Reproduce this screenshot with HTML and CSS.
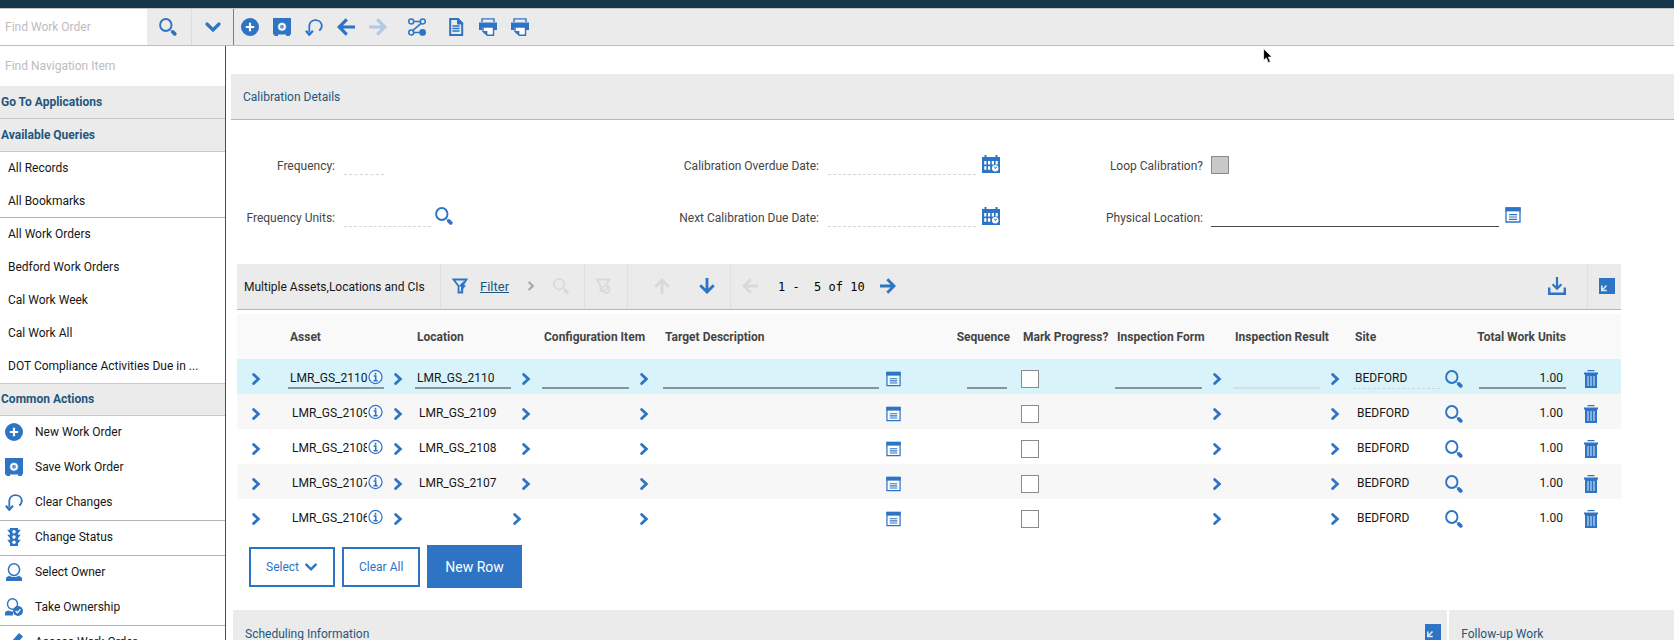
FILE: index.html
```html
<!DOCTYPE html>
<html lang="en">
<head>
  <meta charset="UTF-8">
  <title>Work Order Tracking</title>
  <link rel="stylesheet" href="styles.css">
</head>
<body>

  <!-- Icon sprite -->
  <svg class="sprite" aria-hidden="true">
    <symbol id="search" viewBox="0 0 18 18">
      <ellipse cx="6.8" cy="7" rx="5.7" ry="6" fill="none" stroke="currentColor" stroke-width="1.9"/>
      <path d="M11 11.5l2 2" stroke="currentColor" stroke-width="1"/>
      <path d="M13.9 14l1.8 1.8" stroke="currentColor" stroke-width="3.8" stroke-linecap="round"/>
    </symbol>
    <symbol id="down" viewBox="0 0 18 18"><path d="M3 6l6 6 6-6" fill="none" stroke="currentColor" stroke-width="3.2" stroke-linecap="round"/></symbol>
    <symbol id="right" viewBox="0 0 16 16"><path d="M5.6 3.4L10.4 8l-4.8 4.6" fill="none" stroke="currentColor" stroke-width="2.8" stroke-linecap="round"/></symbol>
    <symbol id="plus" viewBox="0 0 18 18"><circle cx="9" cy="9" r="9" fill="currentColor"/><path d="M9 4.8v8.4M4.8 9h8.4" stroke="#fff" stroke-width="2.2"/></symbol>
    <symbol id="safe" viewBox="0 0 18 18">
      <path d="M0 0h18v16.4h-1.2V18h-3.6v-1.6H5V18H1.4v-1.6H0z" fill="currentColor"/>
      <circle cx="9" cy="8.8" r="4.6" fill="#fff" opacity=".25"/>
      <circle cx="9" cy="8.8" r="2.9" fill="none" stroke="#fff" stroke-width="1.8"/>
    </symbol>
    <symbol id="undo" viewBox="0 0 18 18">
      <path d="M4.3 14.5V7.6A6.3 6 0 0 1 16.8 7.2c0 2.2-.8 4.2-2.6 5.4" fill="none" stroke="currentColor" stroke-width="1.8"/>
      <path d="M.9 12.8l3.4 4 3.6-4" fill="none" stroke="currentColor" stroke-width="2.2"/>
    </symbol>
    <symbol id="arrow" viewBox="0 0 18 18"><path d="M18 9H3M9.8 1.4L2.2 9l7.6 7.6" fill="none" stroke="currentColor" stroke-width="3.2"/></symbol>
    <symbol id="route" viewBox="0 0 18 18">
      <g fill="none" stroke="currentColor" stroke-width="1.5">
        <circle cx="3.2" cy="3.4" r="2.5"/><circle cx="14.8" cy="3.4" r="2.5"/><circle cx="3.2" cy="14.4" r="2.5"/>
        <path d="M5.8 3.4h6.4M13 5.4l-8 7M5.8 14.4H12"/>
      </g>
      <circle cx="14.6" cy="14.4" r="3.4" fill="currentColor"/>
    </symbol>
    <symbol id="doc" viewBox="0 0 18 18">
      <path d="M3.2 1h7.6l4.4 4.4V17H3.2z" fill="none" stroke="currentColor" stroke-width="2"/>
      <path d="M10 0h1.4l4.8 5V6.5H10z" fill="currentColor"/>
      <path d="M5.4 8h7.2M5.4 10.5h7.2M5.4 13h7.2" stroke="currentColor" stroke-width="1.3"/>
    </symbol>
    <symbol id="print" viewBox="0 0 18 18">
      <path d="M3 4V.9h12V4" fill="none" stroke="currentColor" stroke-width="1.4"/>
      <path d="M0 4.5h18V12h-3.2V9H3.2v3H0z" fill="currentColor"/>
      <path d="M4 9h10.5v8.2H8.3L4 13.5z" fill="#fff" stroke="currentColor" stroke-width="1.4"/>
      <path d="M4 13h4.4v4.2z" fill="currentColor"/>
    </symbol>
    <symbol id="light" viewBox="0 0 18 20">
      <path d="M4.5 0h9v2h3l-3 4v1.5h3l-3 4V13h3l-3 4v3h-9v-3l-3-4h3v-1.5l-3-4h3V6l-3-4h3z" fill="currentColor"/>
      <g fill="#fff"><circle cx="9" cy="4.2" r="1.9"/><circle cx="9" cy="10" r="1.9"/><circle cx="9" cy="15.8" r="1.9"/></g>
    </symbol>
    <symbol id="person" viewBox="0 0 18 18">
      <ellipse cx="9" cy="6.6" rx="5.6" ry="5.8" fill="none" stroke="currentColor" stroke-width="1.5"/>
      <path d="M1 18v-2.5C1 14 3 13 4.5 13c2.5 1.4 6.5 1.4 9 0 1.5 0 3.5 1 3.5 2.5V18z" fill="currentColor"/>
    </symbol>
    <symbol id="owner" viewBox="0 0 18 18">
      <ellipse cx="7.5" cy="6" rx="5" ry="5.2" fill="none" stroke="currentColor" stroke-width="1.4"/>
      <path d="M0 17.5V15c0-1.5 2-2.4 3.5-2.4 1.5.8 3 1 4.5 1v3.9z" fill="currentColor"/>
      <circle cx="13" cy="13" r="5" fill="currentColor"/>
      <path d="M10.6 13l1.8 1.8 3-3.4" fill="none" stroke="#fff" stroke-width="1.3"/>
    </symbol>
    <symbol id="pencil" viewBox="0 0 18 18"><path d="M3 12.5L14 0l4 3.5L7 16l-5 2z" fill="currentColor"/></symbol>
    <symbol id="calendar" viewBox="0 0 18 18">
      <path d="M0 2h2.5V0h2v2h9V0h2v2H18v16H0z" fill="currentColor"/>
      <path d="M2.2 6h2.2v3.6H2.2zm3.8 0h2.2v3.6H6zm3.8 0H12v3.6H9.8zm3.8 0h2.2v3.6h-2.2zM2.2 11.3h2.2v3.5H2.2zm3.8 0h2.2v3.5H6z" fill="#fff"/>
      <circle cx="13.2" cy="13.2" r="3.2" fill="#fff"/>
      <path d="M12.8 11.6l.4 2 1.8-1.8" fill="none" stroke="currentColor" stroke-width="1"/>
    </symbol>
    <symbol id="detail" viewBox="0 0 16 16">
      <path d="M1 1h14v14H1z" fill="#fff" fill-opacity=".6" stroke="currentColor" stroke-width="1.3"/>
      <path d="M.4.4h15.2v4H.4z" fill="currentColor"/>
      <path d="M4 7.7h8M4 10h8M4 12.3h8" stroke="currentColor" stroke-width="1.2"/>
    </symbol>
    <symbol id="info" viewBox="0 0 16 16">
      <circle cx="8" cy="8" r="7" fill="#fff" fill-opacity=".5" stroke="currentColor" stroke-width="1.3"/>
      <path d="M8 3.5v2M6 7h2.2v5M5.8 12h4.6" fill="none" stroke="currentColor" stroke-width="1.7"/>
    </symbol>
    <symbol id="funnel" viewBox="0 0 16 16">
      <path d="M1.5 1.5h13L10.3 8v6.5H6.5V8z" fill="none" stroke="currentColor" stroke-width="1.8"/>
      <path d="M7 8l5-5.5L11 7l3 .5L8.5 14l.8-5z" fill="currentColor"/>
    </symbol>
    <symbol id="funnel-clear" viewBox="0 0 16 16">
      <path d="M5.5 14V7.5L1.5 1.5h13L11 6.5" fill="none" stroke="currentColor" stroke-width="1.8"/>
      <circle cx="11" cy="11.3" r="3.7" fill="none" stroke="currentColor" stroke-width="1.6"/><path d="M8.5 14l5-5.5" stroke="currentColor" stroke-width="1.5"/>
    </symbol>
    <symbol id="download" viewBox="0 0 18 18">
      <path d="M1.2 10.5v6.3h15.6v-6.3" fill="none" stroke="currentColor" stroke-width="2.4"/>
      <path d="M9 0v11M4.6 7.2L9 11.7l4.4-4.5" fill="none" stroke="currentColor" stroke-width="2.2"/>
    </symbol>
    <symbol id="shrink" viewBox="0 0 16 16">
      <path d="M0 0h16v16H0z" fill="currentColor"/>
      <path d="M7.5 7.5L3 12.2M2.8 7.5v5h5" fill="none" stroke="#dfe9f5" stroke-width="1.6"/>
    </symbol>
    <symbol id="trash" viewBox="0 0 14 18">
      <path d="M3.5 0h7v1.3h-7zM0 2.6h14v2H0zM1 4.5h12V18H1z" fill="currentColor"/>
      <path d="M4 6v10M7 6v10M10 6v10" stroke="#cfe0f3" stroke-width="1.1"/>
    </symbol>
  </svg>

  <div class="brandbar"></div>

  <header class="toolbar">
    <input class="find" type="text" placeholder="Find Work Order" aria-label="Find Work Order">
    <button class="tool search-btn" aria-label="Search"><svg class="icon"><use href="#search"/></svg></button>
    <button class="tool menu-btn" aria-label="Search options"><svg class="icon"><use href="#down"/></svg></button>
    <nav class="actions">
      <button class="tool" aria-label="New Work Order"><svg class="icon"><use href="#plus"/></svg></button>
      <button class="tool" aria-label="Save Work Order"><svg class="icon"><use href="#safe"/></svg></button>
      <button class="tool" aria-label="Clear Changes"><svg class="icon"><use href="#undo"/></svg></button>
      <button class="tool" aria-label="Previous record"><svg class="icon"><use href="#arrow"/></svg></button>
      <button class="tool off" aria-label="Next record" disabled><svg class="icon turn-right"><use href="#arrow"/></svg></button>
      <button class="tool gap" aria-label="Route Workflow"><svg class="icon"><use href="#route"/></svg></button>
      <button class="tool gap" aria-label="Reports"><svg class="icon"><use href="#doc"/></svg></button>
      <button class="tool" aria-label="Print"><svg class="icon"><use href="#print"/></svg></button>
      <button class="tool" aria-label="Print with attachments"><svg class="icon"><use href="#print"/></svg></button>
    </nav>
  </header>

  <div class="layout">
    <aside class="sidebar">
      <input class="find-nav" type="text" placeholder="Find Navigation Item" aria-label="Find Navigation Item">
      <h2>Go To Applications</h2>
      <h2>Available Queries</h2>
      <ul class="queries">
        <li><a href="#">All Records</a></li>
        <li class="line"><a href="#">All Bookmarks</a></li>
        <li><a href="#">All Work Orders</a></li>
        <li><a href="#">Bedford Work Orders</a></li>
        <li><a href="#">Cal Work Week</a></li>
        <li><a href="#">Cal Work All</a></li>
        <li><a href="#">DOT Compliance Activities Due in ...</a></li>
      </ul>
      <h2 class="topline">Common Actions</h2>
      <ul class="common">
        <li><a href="#"><svg class="icon"><use href="#plus"/></svg>New Work Order</a></li>
        <li><a href="#"><svg class="icon"><use href="#safe"/></svg>Save Work Order</a></li>
        <li class="line"><a href="#"><svg class="icon"><use href="#undo"/></svg>Clear Changes</a></li>
        <li class="line"><a href="#"><svg class="icon"><use href="#light"/></svg>Change Status</a></li>
        <li><a href="#"><svg class="icon"><use href="#person"/></svg>Select Owner</a></li>
        <li class="line"><a href="#"><svg class="icon"><use href="#owner"/></svg>Take Ownership</a></li>
        <li><a href="#"><svg class="icon"><use href="#pencil"/></svg>Assess Work Order</a></li>
      </ul>
    </aside>

    <main class="content">
      <h2 class="section-title">Calibration Details</h2>

      <form class="details">
        <div class="col">
          <label for="freq">Frequency:</label>
          <div class="field"><input id="freq" class="ro short" type="text" readonly></div>
          <label for="units">Frequency Units:</label>
          <div class="field"><input id="units" class="ro medium" type="text" readonly>
            <button type="button" aria-label="Select units"><svg class="icon"><use href="#search"/></svg></button></div>
        </div>
        <div class="col">
          <label for="overdue">Calibration Overdue Date:</label>
          <div class="field dated"><input id="overdue" class="ro wide" type="text" readonly>
            <button type="button" aria-label="Pick overdue date"><svg class="icon"><use href="#calendar"/></svg></button></div>
          <label for="due">Next Calibration Due Date:</label>
          <div class="field dated"><input id="due" class="ro wide" type="text" readonly>
            <button type="button" aria-label="Pick due date"><svg class="icon"><use href="#calendar"/></svg></button></div>
        </div>
        <div class="col">
          <label for="loop">Loop Calibration?</label>
          <div class="field"><input id="loop" type="checkbox" disabled></div>
          <label for="place">Physical Location:</label>
          <div class="field dated"><input id="place" class="long" type="text">
            <button type="button" aria-label="Location details"><svg class="icon mid"><use href="#detail"/></svg></button></div>
        </div>
      </form>

      <section class="assets">
        <div class="tablebar">
          <h3>Multiple Assets,Locations and CIs</h3>
          <div class="group filter">
            <button aria-label="Filter"><svg class="icon mid"><use href="#funnel"/></svg></button>
            <a href="#">Filter</a>
            <svg class="icon tiny"><use href="#right"/></svg>
            <button class="off" aria-label="Find" disabled><svg class="icon mid"><use href="#search"/></svg></button>
          </div>
          <div class="group clear">
            <button class="off" aria-label="Clear filter" disabled><svg class="icon mid"><use href="#funnel-clear"/></svg></button>
          </div>
          <div class="group updown">
            <button class="off" aria-label="Previous row" disabled><svg class="icon mid turn-up"><use href="#arrow"/></svg></button>
            <button aria-label="Next row"><svg class="icon mid turn-down"><use href="#arrow"/></svg></button>
          </div>
          <div class="group pager">
            <button class="off" aria-label="Previous page" disabled><svg class="icon mid"><use href="#arrow"/></svg></button>
            <span class="count">1 -  5 of 10</span>
            <button aria-label="Next page"><svg class="icon mid turn-right"><use href="#arrow"/></svg></button>
          </div>
          <div class="group download">
            <button aria-label="Download"><svg class="icon"><use href="#download"/></svg></button>
          </div>
          <div class="group shrink">
            <button aria-label="Collapse table"><svg class="icon mid"><use href="#shrink"/></svg></button>
          </div>
        </div>

        <table>
          <colgroup>
            <col class="w-open"><col class="w-asset"><col class="w-asset"><col class="w-config"><col>
            <col class="w-seq"><col class="w-mark"><col class="w-form"><col class="w-result"><col class="w-site">
            <col class="w-total"><col class="w-del">
          </colgroup>
          <thead>
            <tr>
              <th></th><th>Asset</th><th>Location</th><th>Configuration Item</th><th>Target Description</th>
              <th class="num">Sequence</th><th>Mark Progress?</th><th>Inspection Form</th><th>Inspection Result</th>
              <th>Site</th><th class="num">Total Work Units</th><th></th>
            </tr>
          </thead>
          <tbody id="rows"></tbody>
        </table>

        <div class="buttons">
          <button class="outline select">Select <svg class="icon caret"><use href="#down"/></svg></button>
          <button class="outline">Clear All</button>
          <button class="primary">New Row</button>
        </div>
      </section>

      <div class="bottom">
        <div class="panel scheduling">
          <h2>Scheduling Information</h2>
          <button aria-label="Collapse scheduling"><svg class="icon mid"><use href="#shrink"/></svg></button>
        </div>
        <div class="panel"><h2>Follow-up Work</h2></div>
      </div>
    </main>
  </div>

  <svg class="pointer" viewBox="0 0 10 16" aria-hidden="true"><path d="M.6.8v11.7l2.7-2.6 2 4.8 2.1-.9-2-4.7h3.7z" fill="#000" stroke="#fff" stroke-width=".8"/></svg>

  <script>
    const rows = [
      { asset: 'LMR_GS_2110', location: 'LMR_GS_2110' },
      { asset: 'LMR_GS_2109', location: 'LMR_GS_2109' },
      { asset: 'LMR_GS_2108', location: 'LMR_GS_2108' },
      { asset: 'LMR_GS_2107', location: 'LMR_GS_2107' },
      { asset: 'LMR_GS_2106', location: '' }
    ];

    function button(icon, label, size) {
      return `<button aria-label="${label}"><svg class="icon ${size}"><use href="#${icon}"/></svg></button>`;
    }

    // The first row is open for editing, the others only show their value
    function value(text, label, edit, cls = '') {
      if (edit) {
        return `<input class="val ${cls}" type="text" value="${text}" aria-label="${label}">`;
      }
      return `<span class="val ${cls}">${text}</span>`;
    }

    document.getElementById('rows').innerHTML = rows.map((r, i) => {
      const edit = i === 0;
      return `<tr class="${edit ? 'current' : ''}">
        <td class="open">${button('right', 'Open row', 'mid')}</td>
        <td><div class="cell"><div class="asset">${value(r.asset, 'Asset', edit)}${button('info', 'Asset info', 'small')}</div>${button('right', 'Asset menu', 'mid')}</div></td>
        <td><div class="cell">${value(r.location, 'Location', edit, r.location ? 'location' : 'config')}${button('right', 'Location menu', 'mid')}</div></td>
        <td><div class="cell">${value('', 'Configuration Item', edit, 'config')}${button('right', 'Item menu', 'mid')}</div></td>
        <td><div class="cell">${value('', 'Target Description', edit, 'target')}${button('detail', 'Description', 'small')}</div></td>
        <td><div class="cell seq">${value('', 'Sequence', edit, 'sequence')}</div></td>
        <td><div class="cell"><input type="checkbox" aria-label="Mark Progress ${i + 1}"></div></td>
        <td><div class="cell">${value('', 'Inspection Form', edit, 'config')}${button('right', 'Form menu', 'mid')}</div></td>
        <td><div class="cell">${value('', 'Inspection Result', edit, 'config faint')}${button('right', 'Result menu', 'mid')}</div></td>
        <td><div class="cell site">${value('BEDFORD', 'Site', edit, 'config dashed')}${button('search', 'Find site', '')}</div></td>
        <td><div class="cell total">${value('1.00', 'Total Work Units', edit, 'config right')}</div></td>
        <td><div class="cell del">${button('trash', 'Delete row', 'bin')}</div></td>
      </tr>`;
    }).join('');
  </script>

</body>
</html>
```

FILE: styles.css
```css
* { box-sizing: border-box; }
body {
  margin: 0; height: 100vh; display: flex; flex-direction: column; overflow: hidden;
  background: #fff; color: #161616; font: 12px/16px Roboto, "Liberation Sans", sans-serif;
}
h2, h3, ul { margin: 0; padding: 0; font-size: 12px; font-weight: 400; }
ul { list-style: none; }
a { color: inherit; text-decoration: none; }
input, button { font: inherit; color: inherit; margin: 0; padding: 0; border: 0; background: none; border-radius: 0; outline: none; }
button { display: flex; align-items: center; justify-content: center; color: #2d74c4; cursor: pointer; flex: none; }
input::placeholder { color: #bdbdbd; opacity: 1; }
input[type=checkbox] { appearance: none; width: 18px; height: 18px; border: 1px solid #8a8a8a; background: #fff; flex: none; }
input[type=checkbox]:disabled { background: #c8c8c8; }

.sprite { display: none; }
.icon { display: block; width: 18px; height: 18px; flex: none; }
.mid { width: 16px; height: 16px; }
.small { width: 15px; height: 16px; }
.tiny { width: 12px; height: 12px; color: #a8a89c; }
.bin { width: 14px; height: 18px; }
.turn-right { transform: rotate(180deg); }
.turn-up { transform: rotate(90deg); }
.turn-down { transform: rotate(-90deg); }

.brandbar { height: 8px; background: #17364b; flex: none; }

/* top toolbar */
.toolbar { display: flex; height: 38px; flex: none; background: #ebebeb; border-top: 1px solid #c4c4c4; border-bottom: 1px solid #bdbdbd; }
.find { width: 147px; padding: 0 5px; background: #fff; }
.search-btn { width: 45px; padding-right: 3px; border-right: 1px solid #dcdcdc; }
.menu-btn { width: 42px; border-right: 1px solid #7d7d7d; }
.actions { display: flex; }
.actions .tool { width: 32px; }
.actions .gap { margin-left: 7px; }
.off { color: #d9d9d9; cursor: default; }
.actions .off { color: #b3c8e2; }

.layout { display: flex; flex: 1; min-height: 0; }

/* left navigation */
.sidebar { width: 226px; flex: none; border-right: 1px solid #2a5570; overflow: hidden; }
.find-nav { display: block; width: 100%; height: 40px; padding: 0 5px; }
.sidebar h2 { height: 33px; padding: 0 1px; line-height: 33px; font-weight: 700; color: #1f577d; background: #ebebeb; border-bottom: 1px solid #c9c9c9; }
.sidebar .topline { border-top: 1px solid #c9c9c9; line-height: 31px; }
.queries a { display: block; padding: 0 8px; line-height: 33px; height: 33px; }
.common a { display: flex; align-items: center; gap: 12px; height: 35px; padding: 0 5px 3px; }
.queries .line a, .common .line a { border-bottom: 1px solid #b5b5b5; }
.common .icon { color: #2d74c4; }

/* main area */
.content { flex: 1; min-width: 0; padding: 28px 0 0 5px; overflow: hidden; }
.section-title { height: 46px; padding: 0 12px; line-height: 47px; color: #1f577d; background: #ebebeb; border-bottom: 1px solid #b5b5b5; }

.details { display: flex; height: 144px; padding-top: 27px; }
.col { display: grid; grid-template-columns: 104px 1fr; grid-auto-rows: 52px; column-gap: 9px; width: 382px; color: #454545; }
.col:nth-child(2) { grid-template-columns: 206px 1fr; width: 398px; }
.col:nth-child(3) { grid-template-columns: 192px 1fr; column-gap: 8px; flex: 1; }
.col label { text-align: right; padding-top: 11px; }
.field { display: flex; align-items: flex-start; gap: 4px; padding-top: 7px; }
.field.dated { gap: 6px; }
.field button { padding-top: 1px; }
.field input[type=text] { height: 21px; border-bottom: 1px solid #4c4c4c; }
.field input.ro[type=text] { border-bottom: 1px dashed #d6d6d6; }
.field input[type=checkbox] { margin-top: 2px; }
.field .short { width: 40px; }
.field .medium { width: 87px; }
.field .wide { width: 148px; }
.field .long { width: 288px; }

/* assets table */
.assets { margin: 0 53px 0 6px; }
.tablebar { display: flex; height: 46px; background: #ebebeb; border-bottom: 1px solid #b5b5b5; }
.tablebar h3 { width: 203px; padding-left: 7px; line-height: 46px; white-space: nowrap; }
.group { display: flex; align-items: center; border-left: 1px solid #dfdfdf; padding-bottom: 1px; }
.filter { width: 144px; padding-left: 11px; }
.filter a { margin: 2px 16px 0 12px; font-size: 13px; color: #1f577d; text-decoration: underline; }
.filter button.off { margin-left: 16px; }
.clear { width: 43px; padding-right: 6px; justify-content: center; }
.updown { width: 103px; padding-left: 26px; gap: 29px; }
.pager { flex: 1; padding-left: 11px; }
.count { margin: 2px 15px 0 20px; font: 12px/16px "DejaVu Sans Mono", monospace; color: #000; white-space: pre; }
.download { border: 0; width: 39px; }
.shrink { width: 34px; padding-left: 4px; justify-content: center; }

table { width: 100%; margin-top: 4px; border-collapse: collapse; table-layout: fixed; }
.w-open { width: 49px; }
.w-asset { width: 127px; }
.w-config { width: 121px; }
.w-seq { width: 69px; }
.w-mark { width: 94px; }
.w-form { width: 118px; }
.w-result { width: 120px; }
.w-site { width: 115px; }
.w-total { width: 109px; }
.w-del { width: 46px; }
th { height: 45px; padding: 0 0 0 4px; text-align: left; font-weight: 700; color: #454545; background: #f9f9f9; white-space: nowrap; }
th.num { text-align: right; padding-right: 9px; }
td { height: 35px; padding: 0 0 0 2px; }
tbody tr:nth-child(even) { background: #f7f7f7; }
tbody tr.current { background: #d8f3fa; }
.open { padding-left: 11px; }
.open button { padding-top: 5px; }
.cell { display: flex; align-items: center; gap: 7px; padding-top: 4px; }
.val { display: block; width: 96px; height: 21px; padding-left: 4px; line-height: 20px; overflow: hidden; white-space: nowrap; }
input.val { padding-left: 2px; line-height: 16px; border-bottom: 2px solid #8a9499; }
.asset { display: flex; position: relative; width: 95px; }
.asset span.val { width: 79px; }
.asset button { position: absolute; right: 0; top: 1px; }
.val.config { width: 87px; }
.val.target { flex: 1; }
.cell:has(.target) { padding-right: 49px; }
.val.sequence { width: 40px; }
.val.right { text-align: right; padding-right: 3px; }
input.val.faint { border-bottom-color: #d5dfe3; }
input.val.dashed { border-bottom: 1px dashed #ccd6da; }
.seq { justify-content: flex-end; padding-right: 12px; }
.site { gap: 5px; }
.total { justify-content: flex-end; padding-right: 9px; }
.del { padding-left: 7px; }

.buttons { display: flex; align-items: center; gap: 7px; padding: 11px 12px; }
.outline { height: 40px; padding: 0 15px; border: 2px solid #2d74c4; }
.select { gap: 5px; }
.caret { width: 14px; height: 14px; }
.primary { height: 43px; padding: 0 18px; background: #2d74c4; color: #fff; font-size: 14px; }

.bottom { display: grid; grid-template-columns: 27fr 5fr; gap: 2px; margin: 11px 0 0 2px; }
.panel { display: flex; align-items: flex-start; justify-content: space-between; height: 46px; padding: 14px 12px; background: #ebebeb; color: #1f577d; }
.panel h2 { line-height: 20px; }
.scheduling { padding-right: 6px; }

.pointer { position: absolute; left: 1263px; top: 48px; width: 10px; height: 16px; }
```
